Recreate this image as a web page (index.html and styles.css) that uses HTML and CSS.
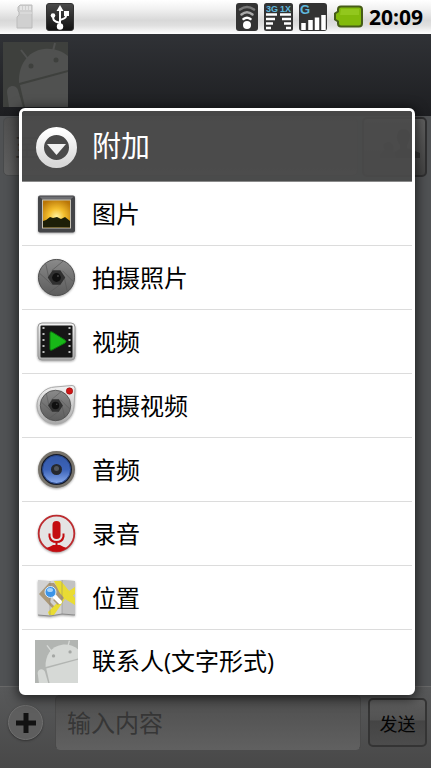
FILE: index.html
```html
<!DOCTYPE html>
<html lang="zh-Hans">
<head>
  <meta charset="UTF-8">
  <meta name="viewport" content="width=device-width, initial-scale=1.0">
  <title>附加</title>
  <link rel="stylesheet" href="styles.css">
</head>
<body>
  <svg class="defs" width="0" height="0" aria-hidden="true">
    <symbol id="droid" viewBox="0 0 65 65">
      <path fill="currentColor" d="M16 41C15 24 24 9 41 7C51 6 59 9 65 14V28Z"/>
      <path fill="currentColor" d="M17 43L65 30V65H22Z"/>
      <path fill="currentColor" d="M6 65L4 50C4 43 13 42 15 48L20 65Z"/>
      <path stroke="currentColor" stroke-width="2" d="M18 8l7 9M52 1l-2 8"/>
      <circle class="droid-eye" cx="28" cy="24" r="2.5"/>
      <circle class="droid-eye" cx="53" cy="18" r="2.5"/>
    </symbol>
    <linearGradient id="lens" x1="0" y1="0" x2="0" y2="1">
      <stop offset="0" stop-color="#8a8a8a"/><stop offset=".5" stop-color="#727272"/><stop offset="1" stop-color="#5c5c5c"/>
    </linearGradient>
    <linearGradient id="silver" x1="0" y1="0" x2="0" y2="1">
      <stop offset="0" stop-color="#f4f4f4"/><stop offset="1" stop-color="#a8a8a8"/>
    </linearGradient>
    <linearGradient id="ring" x1="0" y1="0" x2="0" y2="1">
      <stop offset="0" stop-color="#fff"/><stop offset="1" stop-color="#d8d8d8"/>
    </linearGradient>
    <linearGradient id="chip" x1="0" y1="0" x2="0" y2="1">
      <stop offset="0" stop-color="#4a4a4a"/><stop offset="1" stop-color="#111"/>
    </linearGradient>
    <symbol id="shutter" viewBox="0 0 40 40">
      <circle cx="20" cy="20" r="18.5" fill="url(#lens)" stroke="#4c4c4c"/>
      <path d="M15 13L27 3M26 13L37 24M28 20L31 34M24 27L12 36M15 27L3 16M12 20L9 6" stroke="#555" stroke-width=".7" fill="none"/>
      <path d="M16 12.500h8l5 7.500-5 7.500h-8l-5-7.500z" fill="#303030"/>
      <circle cx="20" cy="20" r="4.500" fill="#101010"/>
      <circle cx="21.500" cy="18.500" r="1" fill="#444"/>
    </symbol>
  </svg>

  <header class="status-bar">
    <svg width="18" height="26" viewBox="0 0 18 26">
      <path d="M4 1h12v23H1V13l2-2V8l-1-1V3z" fill="#d0d0d0" stroke="#bcbcbc"/>
      <path d="M5 2v4M8 2v4M11 2v4M14 2v4" stroke="#ececec" stroke-width="1.500"/>
      <path d="M4 9h12" stroke="#e2e2e2"/>
    </svg>
    <svg width="28" height="28" viewBox="0 0 28 28">
      <rect x=".5" y=".5" width="27" height="27" rx="2.500" fill="url(#chip)" stroke="#333"/>
      <path d="M14 23V5M14 20C7 18 7 17 7 12M14 17C21 15 20 14 20 10" stroke="#fff" stroke-width="2" fill="none"/>
      <path d="M10.500 8L14 2l3.500 6z" fill="#fff"/>
      <circle cx="14" cy="23.500" r="3.200" fill="#fff"/><circle cx="7" cy="12.500" r="2.300" fill="#fff"/>
      <path d="M18 8h5v5h-5z" fill="#fff"/>
    </svg>
    <div class="status-right">
      <svg width="22" height="28" viewBox="0 0 22 28">
        <rect width="22" height="28" rx="3" fill="#333"/>
        <g fill="none" stroke-width="2.500" stroke-linecap="round">
          <path d="M4 6.500Q11 1.500 18 6.500" stroke="#777"/>
          <path d="M5.500 11.500Q11 7 16.500 11.500" stroke="#aaa"/>
          <path d="M7.500 16Q11 13.500 14.500 16" stroke="#fff"/>
        </g>
        <circle cx="11" cy="22" r="4" fill="#fff"/>
      </svg>
      <svg width="29" height="28" viewBox="0 0 29 28">
        <rect width="29" height="28" rx="2.500" fill="#333"/>
        <text class="net-label" x="2" y="9">3G</text>
        <text class="net-label" x="16" y="9">1X</text>
        <path d="M2 11.500h11M2 16h9M2 20.500h7M2 25h5M16 11.500h11M18 16h9M20 20.500h7M22 25h5" stroke="#fff" stroke-width="2.500"/>
      </svg>
      <svg width="28" height="28" viewBox="0 0 28 28">
        <rect width="28" height="28" rx="3" fill="#333"/>
        <text class="net-letter" x="1" y="11">G</text>
        <path d="M4.500 27v-7M11.500 27V17M18 27V14.500M24.500 27V12" stroke="#fff" stroke-width="4.500"/>
      </svg>
      <svg width="30" height="24" viewBox="0 0 30 24">
        <path d="M8 1.500h18q3 0 3 3v14q0 3-3 3H8q-3 0-3-3v-2l-3-2V8.500l3-2v-2q0-3 3-3z" fill="#82ba0b" stroke="#465c18" stroke-width="2"/>
        <path d="M8 4h18v6H7z" fill="#a2d32f" opacity=".5"/>
      </svg>
      <time class="clock">20:09</time>
    </div>
  </header>

  <main class="app">
    <div class="app-header">
      <svg class="droid droid-dark" width="65" height="65"><use href="#droid"/></svg>
    </div>
    <div class="recipients">
      <input class="recipient-input" type="text" placeholder="至" aria-label="至">
      <button class="contact-btn" type="button" aria-label="选择联系人">
        <svg width="42" height="36" viewBox="0 0 42 36">
          <path d="M24 2q8 0 7 8-1 6-3 8v3l13 5v5H14v-5l7-4v-4q-4-5-3-10 1-6 6-6z" fill="#353535"/>
          <path d="M9 15q6 0 5 8l3 8H1v-4l5-4q-4-7 3-8z" fill="#3c3c3c"/>
        </svg>
      </button>
    </div>
    <div class="messages"></div>
    <form class="composer">
      <button class="add-btn" type="button" aria-label="附加">
        <svg width="20" height="20" viewBox="0 0 20 20"><path d="M10 0v20M0 10h20" stroke="#121212" stroke-width="5"/></svg>
      </button>
      <input class="message-input" type="text" placeholder="输入内容" aria-label="输入内容">
      <button class="send-btn" type="button">发送</button>
    </form>

    <div class="overlay">
      <section class="dialog" role="dialog" aria-labelledby="dialog-title">
        <div class="dialog-header">
          <svg width="43" height="43" viewBox="0 0 43 43">
            <circle cx="21.500" cy="21.500" r="16.500" fill="#4a4a4a" stroke="url(#ring)" stroke-width="8"/>
            <path d="M12 18h19L21.500 29z" fill="#f2f2f2"/>
          </svg>
          <h1 class="dialog-title" id="dialog-title">附加</h1>
        </div>
        <ul class="menu">
          <li><button class="menu-item" type="button">
            <svg class="icon" viewBox="0 0 43 43">
              <defs><radialGradient id="sun" cx=".5" cy=".6" r=".65"><stop offset="0" stop-color="#fff3a0"/><stop offset=".45" stop-color="#f3bd2c"/><stop offset="1" stop-color="#b97608"/></radialGradient></defs>
              <rect x="3" y="3.500" width="37" height="37" rx="2" fill="#444548"/>
              <path d="M4 4.500h35l-5 4H9z" fill="#6e6f73"/>
              <rect x="7.500" y="8" width="28" height="28" fill="url(#sun)" stroke="#c4c0b4"/>
              <path d="M8 29q4-1 7-4l3 1 4-1 4 2 4-2 5 4v6.500H8z" fill="#1d1f08"/>
            </svg>
            <span>图片</span></button></li>
          <li><button class="menu-item" type="button">
            <svg class="icon" viewBox="0 0 43 43"><use href="#shutter" x="2" y="2" width="39" height="39"/></svg>
            <span>拍摄照片</span></button></li>
          <li><button class="menu-item" type="button">
            <svg class="icon" viewBox="0 0 43 43">
              <rect x="3" y="3" width="37" height="37" rx="4" fill="url(#silver)" stroke="#999"/>
              <rect x="5.500" y="5.500" width="32" height="32" rx="1" fill="#161616"/>
              <path d="M8.500 7v30M34.500 7v30" stroke="#bbb" stroke-width="2" stroke-dasharray="2 4"/>
              <path d="M15 13q0-2 2-1l13 8q2 1.500 0 3l-13 7q-2 1-2-1z" fill="#18b818" stroke="#0c780c"/>
            </svg>
            <span>视频</span></button></li>
          <li><button class="menu-item" type="button">
            <svg class="icon" viewBox="0 0 43 43">
              <path d="M20 3L37 1.500q3 0 3 3L39 22A18.500 18.500 0 1 1 20 3z" fill="url(#silver)" stroke="#aaa"/>
              <use href="#shutter" x="4" y="5" width="33" height="33"/>
              <circle cx="34.500" cy="7" r="3.200" fill="#d01414" stroke="#8d0c0c" stroke-width=".6"/>
            </svg>
            <span>拍摄视频</span></button></li>
          <li><button class="menu-item" type="button">
            <svg class="icon" viewBox="0 0 43 43">
              <defs><linearGradient id="cone" x1="0" y1="0" x2="0" y2="1"><stop offset="0" stop-color="#3459a8"/><stop offset=".5" stop-color="#3c63b8"/><stop offset="1" stop-color="#87a9eb"/></linearGradient></defs>
              <circle cx="21.500" cy="21.500" r="17" fill="#151a28" stroke="#77736b" stroke-width="3"/>
              <circle cx="21.500" cy="21.500" r="14" fill="url(#cone)" stroke="#27468a"/>
              <circle cx="21.500" cy="21.500" r="5.500" fill="#25282e"/>
              <circle cx="21.500" cy="20.500" r="2.500" fill="#50555c"/>
            </svg>
            <span>音频</span></button></li>
          <li><button class="menu-item" type="button">
            <svg class="icon" viewBox="0 0 43 43">
              <circle cx="21.500" cy="21.500" r="17.800" fill="#e4e4e4" stroke="#bd2b2f" stroke-width="1.800"/>
              <path d="M11 36q4-1 7-3h7q3 2 7 3-10 7-21 0z" fill="#c40c10"/>
              <rect x="17.500" y="9" width="8" height="18" rx="4" fill="#c40c10"/>
              <path d="M14.500 21.500v3q1 5.500 7 5.500t7-5.500v-3M21.500 30v6" fill="none" stroke="#c40c10" stroke-width="2"/>
            </svg>
            <span>录音</span></button></li>
          <li><button class="menu-item" type="button">
            <svg class="icon" viewBox="0 0 43 43">
              <path d="M3 4l12 1 12-1 13 1v34l-13-1-12 2-12-1z" fill="#d2d2d2"/>
              <path d="M27 4l13 1v34l-13-1z" fill="#c2c2c2"/>
              <path d="M4 18L14 7h5l12 14-12 13z" fill="#ab9878"/>
              <path d="M16 20l6-4 4 9-6 6-5-5z" fill="#d2d2d2"/>
              <path d="M19 5h7l14 17v7L30 23 19 39h-5l-1-3 14-14z" fill="#e9dc33"/>
              <path d="M31 17l9-6v7l-6 4z" fill="#e9dc33"/>
              <path d="M19 10l10 12-6 7-5-5 5-3-6-8z" fill="#ab9878"/>
              <path d="M15 5v35M27 4v34" stroke="#777" opacity=".4"/>
              <path d="M19 20l6 6" stroke="#fff" stroke-width="4" stroke-linecap="round"/>
              <circle cx="15.500" cy="16" r="5.500" fill="#3b94e8" stroke="#d9ecff"/>
              <ellipse cx="15" cy="14" rx="3" ry="2" fill="#a8d4fa"/>
              <path d="M3 39l12 1 12-2 13 1" fill="none" stroke="#8a8a8a"/>
            </svg>
            <span>位置</span></button></li>
          <li><button class="menu-item" type="button">
            <svg class="icon droid droid-light"><use href="#droid"/></svg>
            <span>联系人(文字形式)</span></button></li>
        </ul>
      </section>
    </div>
  </main>
</body>
</html>
```

FILE: styles.css
```css
* {
  box-sizing: border-box;
}

body {
  margin: 0;
  min-height: 100vh;
  display: flex;
  flex-direction: column;
  font-family: "Open Sans", "Noto Sans CJK SC", sans-serif;
  background: #505254;
}

button, input {
  font-family: inherit;
  margin: 0;
}

.defs {
  position: absolute;
}

/* status bar */
.status-bar {
  display: flex;
  align-items: center;
  gap: 12px;
  height: 34px;
  padding: 0 8px 0 16px;
  background: linear-gradient(#fff, #f2f2f2 25%, #d8d8d8 60%, #e0e0e0 75%, #fff);
}

.status-right {
  display: flex;
  align-items: center;
  gap: 6px;
  margin-left: auto;
}

.clock {
  font-size: 21px;
  line-height: 24px;
  font-weight: bold;
  color: #000;
}

.net-label {
  font: bold 9px "Liberation Sans", sans-serif;
  fill: #5fb8de;
}

.net-letter {
  font: bold 13px "Liberation Sans", sans-serif;
  fill: #5fb8de;
}

/* screen under the dialog */
.app {
  position: relative;
  flex: 1;
  display: flex;
  flex-direction: column;
}

.app-header {
  height: 82px;
  padding: 8px 3px;
  background: linear-gradient(#303236, #1d1e21);
}

.droid {
  display: block;
}

.droid-dark {
  color: #505150;
  background: #3e403d;
  fill: #3e403d;
}

.droid-light {
  color: #d6d9d6;
  background: #b2b5b2;
  fill: #a4a7a4;
}

.recipients {
  display: flex;
  gap: 4px;
  padding: 1px 4px 0 3px;
}

.recipient-input {
  flex: 1;
  min-width: 0;
  height: 59px;
  padding: 0 11px;
  border: 1px solid #494b4c;
  border-radius: 5px;
  background: linear-gradient(#505050, #606060);
  font-size: 24px;
  color: #111;
}

.contact-btn {
  width: 65px;
  height: 60px;
  padding: 0 0 0 10px;
  border: 2px solid #303031;
  border-radius: 5px;
  background: linear-gradient(#606060, #444);
}

.messages {
  flex: 1;
}

.composer {
  display: flex;
  align-items: center;
  gap: 7px;
  height: 82px;
  padding: 0 4px 10px 8px;
  border-top: 1px solid #686868;
  background: linear-gradient(#58595a, #484848);
}

.add-btn {
  display: flex;
  align-items: center;
  justify-content: center;
  width: 35px;
  height: 35px;
  margin-right: 5px;
  padding: 0;
  border: 1px solid #707070;
  border-radius: 50%;
  background: #5e5e5e;
  box-shadow: 0 1px 2px #333;
}

.message-input {
  flex: 1;
  min-width: 0;
  height: 55px;
  padding: 0 11px;
  border: 1px solid #494949;
  border-bottom-color: #606060;
  border-radius: 5px;
  background: linear-gradient(#4e4e4e, #606060);
  font-size: 24px;
  color: #111;
}

.recipient-input::placeholder,
.message-input::placeholder {
  color: #363636;
  opacity: 1;
}

.send-btn {
  width: 59px;
  height: 49px;
  padding: 0;
  border: 2px solid #343434;
  border-radius: 5px;
  background: linear-gradient(#5e5e5e, #525252 45%, #444 46%, #4c4c4c);
  font-size: 18px;
  color: #050505;
}

/* attach dialog */
.overlay {
  position: absolute;
  inset: 0;
  display: flex;
  align-items: center;
  padding: 1px 16px 0 19px;
}

.dialog {
  flex: 1;
  border: 3px solid #fff;
  border-radius: 6px;
  box-shadow: 0 2px 12px 2px rgba(0, 0, 0, 0.6);
}

.dialog-header {
  display: flex;
  align-items: center;
  gap: 14px;
  height: 71px;
  padding: 3px 13px 0;
  border-radius: 3px 3px 0 0;
  background: rgba(74, 74, 74, 0.93);
  border-bottom: 1px solid #8a8a8a;
}

.dialog-title {
  margin: 0;
  padding-bottom: 4px;
  font-size: 29px;
  line-height: 40px;
  font-weight: normal;
  color: #fff;
}

.menu {
  margin: 0;
  padding: 0;
  list-style: none;
  background: #fff;
}

.menu li {
  height: 64px;
  border-bottom: 1px solid #dcdcdc;
}

.menu li:last-child {
  height: 62px;
  border-bottom: none;
}

.menu-item {
  display: flex;
  align-items: center;
  gap: 14px;
  width: 100%;
  height: 100%;
  padding: 0 13px;
  border: none;
  background: none;
  font-size: 24px;
  line-height: 32px;
  text-align: left;
  color: #000;
}

.icon {
  flex: none;
  width: 43px;
  height: 43px;
  filter: drop-shadow(0 1px 1px rgba(0, 0, 0, 0.35));
}

.icon.droid {
  filter: none;
}
```
